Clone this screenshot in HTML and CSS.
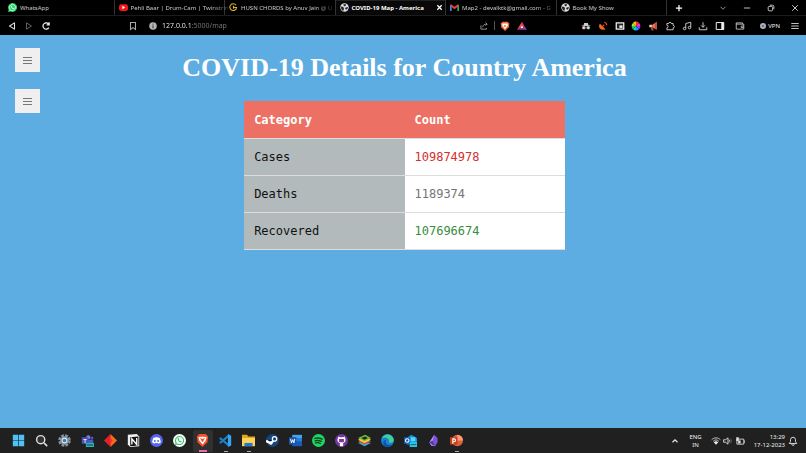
FILE: index.html
```html
<!DOCTYPE html>
<html lang="en">
<head>
<meta charset="utf-8">
<title>COVID-19 Map - America</title>
<link rel="stylesheet" href="styles.css">
</head>
<body>
<header class="browser">
  <div class="tabstrip">
    <div class="tabs">
      <button class="tab"><svg viewBox="0 0 16 16"><path fill="#25d366" d="M8 0a8 8 0 1 1-3.700 15L0 16l1.200-4A8 8 0 0 1 8 0z"/><path fill="none" stroke="#fff" stroke-width="1.200" d="M8 2.500a5.500 5.500 0 1 1-3 10.200l-2 .5.600-2A5.500 5.500 0 0 1 8 2.500z"/><path fill="#fff" d="M5.500 5l1.200-.2.800 1.700-.6.900 1.800 1.700.9-.6 1.600.9-.3 1.300C8.500 12 4.500 8.500 5.500 5z"/></svg><span class="label">WhatsApp</span></button>
      <button class="tab"><svg viewBox="0 0 16 16"><rect y="2" width="16" height="12" rx="4" fill="#f01818"/><path fill="#fff" d="M6 5l5 3-5 3z"/></svg><span class="label faded">Pehli Baar | Drum-Cam | Twinstrin</span></button>
      <button class="tab"><svg viewBox="0 0 16 16"><path fill="none" stroke="#e0ad35" stroke-width="2" d="M12.500 4a6 6 0 1 0 1 4H8M8 5v5"/></svg><span class="label faded">HUSN CHORDS by Anuv Jain @ U</span></button>
      <button class="tab active"><svg viewBox="0 0 16 16"><circle cx="8" cy="8" r="7.500" fill="#ddd"/><path fill="#222" d="M2 6l4 1 1 3-1 4C3 13 1 9 2 6zM6 2l5 0-1 3-3 1zM10 8l4-1c0 3-1 4-3 5l-2-2z"/></svg><span class="label">COVID-19 Map - America</span><svg class="tab-close" viewBox="0 0 16 16"><path fill="none" stroke="#fff" stroke-width="3" d="M3 3l10 10M13 3L3 13"/></svg></button>
      <button class="tab"><svg viewBox="0 0 16 16"><path fill="#4285f4" d="M0 3h3v11H0z"/><path fill="#34a853" d="M13 3h3v11h-3z"/><path fill="none" stroke="#ea4335" stroke-width="3.200" d="M1.500 4L8 9l6.500-5"/></svg><span class="label faded">Map2 - devalktk@gmail.com - G</span></button>
      <button class="tab"><svg viewBox="0 0 16 16"><circle cx="8" cy="8" r="7.500" fill="#ddd"/><path fill="#222" d="M2 6l4 1 1 3-1 4C3 13 1 9 2 6zM6 2l5 0-1 3-3 1zM10 8l4-1c0 3-1 4-3 5l-2-2z"/></svg><span class="label">Book My Show</span></button>
    </div>
    <button class="icon new-tab" aria-label="New tab"><svg viewBox="0 0 16 16"><path fill="none" stroke="#fff" stroke-width="2" d="M8 3v10M3 8h10"/></svg></button>
    <div class="window-controls">
      <button class="icon" aria-label="Search tabs"><svg viewBox="0 0 16 16"><path fill="none" stroke="#999" stroke-width="1.500" d="M4 6l4 4 4-4"/></svg></button>
      <button class="icon" aria-label="Minimize"><svg viewBox="0 0 16 16"><path fill="none" stroke="#bbb" stroke-width="1.600" d="M3 8h10"/></svg></button>
      <button class="icon" aria-label="Restore"><svg viewBox="0 0 16 16"><rect x="3.500" y="5.500" width="7" height="7" rx="1.500" fill="none" stroke="#ccc" stroke-width="1.500"/><path fill="none" stroke="#ccc" stroke-width="1.500" d="M6 3.500h4.500a2 2 0 0 1 2 2V10"/></svg></button>
      <button class="icon" aria-label="Close"><svg viewBox="0 0 16 16"><path fill="none" stroke="#ddd" stroke-width="1.400" d="M3.500 3.500l9 9M12.500 3.500l-9 9"/></svg></button>
    </div>
  </div>
  <div class="toolbar">
    <nav class="nav">
      <button class="icon" aria-label="Back"><svg viewBox="0 0 16 16"><path fill="none" stroke="#ddd" stroke-width="1.700" stroke-linejoin="round" d="M12 3v10L4 8z"/></svg></button>
      <button class="icon" aria-label="Forward"><svg viewBox="0 0 16 16"><path fill="none" stroke="#666" stroke-width="1.500" stroke-linejoin="round" d="M4 3v10l8-5z"/></svg></button>
      <button class="icon" aria-label="Reload"><svg viewBox="0 0 16 16"><path fill="none" stroke="#eee" stroke-width="2" d="M12.500 10.500a5 5 0 1 1 0-5M13 2v4H9"/></svg></button>
    </nav>
    <div class="address">
      <button class="icon" aria-label="Bookmark"><svg viewBox="0 0 16 16"><path fill="none" stroke="#aaa" stroke-width="1.700" d="M4 2.500h8v11L8 10.500l-4 3z"/></svg></button>
      <button class="icon info" aria-label="Site information"><svg viewBox="0 0 16 16"><circle cx="8" cy="8" r="6" fill="#b5b5b5"/><path stroke="#333" stroke-width="1.600" d="M8 7v4.500M8 4.300v1.500"/></svg></button>
      <input class="url" type="text" aria-label="Address" value="127.0.0.1:5000/map">
      <button class="icon" aria-label="Share"><svg viewBox="0 0 16 16"><path fill="none" stroke="#aaa" stroke-width="1.300" d="M3 7v6h9v-2M6 10c0-4 3-5 7-5M10.500 2.500L13 5l-2.500 2.500"/></svg></button>
      <span class="divider"></span>
      <button class="icon shield" aria-label="Shields"><svg viewBox="0 0 16 16"><path fill="#f26b3a" d="M4 1h8l3 3-1 6-6 6-6-6-1-6z"/><path fill="#fff" d="M4 4h8l.5 3L8 13 3.500 7z"/><path fill="#f26b3a" d="M6 6l2 1 2-1-1 3-1 1-1-1z"/></svg></button>
      <button class="icon rewards" aria-label="Rewards"><svg viewBox="0 0 16 16"><path fill="#d0356b" d="M8 1l4 7-4 3z"/><path fill="#ef5138" d="M8 1L0 14l8-4z"/><path fill="#883ca5" d="M0 14h16l-4-6-4 2z"/><path fill="#fff" d="M8 7l2 4H6z"/></svg></button>
    </div>
    <div class="extensions">
      <button class="icon" aria-label="Incognito extension"><svg viewBox="0 0 16 16"><path fill="#ccc" d="M5 3h6l1 4h3v1H1V7h3z"/><circle cx="4.500" cy="10.500" r="3" fill="#b88"/><circle cx="11.500" cy="10.500" r="3" fill="#7aa"/><path fill="#fff" d="M3 10h3v2H3zM10 10h3v2h-3z"/></svg></button>
      <button class="icon" aria-label="Satellite extension"><svg viewBox="0 0 16 16"><path fill="#f06a20" d="M3 4c-4 7 2 12 9 9z"/><path fill="none" stroke="#e84820" stroke-width="1.800" d="M10 2a5 5 0 0 1 4 5M7 9l3-3"/></svg></button>
      <button class="icon" aria-label="Picture in picture"><svg viewBox="0 0 16 16"><path fill="#eee" d="M1 2h14v12H1z"/><path fill="#222" d="M3 4h10v8H3z"/><path fill="#eee" d="M7 7h5v4H7z"/></svg></button>
      <button class="icon" aria-label="Color picker"><svg viewBox="0 0 16 16"><path fill="#e33" d="M8 8V1a7 7 0 0 1 5 2z"/><path fill="#f3a" d="M8 8l5-5a7 7 0 0 1 2 5z"/><path fill="#83f" d="M8 8h7a7 7 0 0 1-2 5z"/><path fill="#28f" d="M8 8l5 5a7 7 0 0 1-5 2z"/><path fill="#1cc" d="M8 8v7a7 7 0 0 1-5-2z"/><path fill="#2c4" d="M8 8l-5 5a7 7 0 0 1-2-5z"/><path fill="#bd2" d="M8 8H1a7 7 0 0 1 2-5z"/><path fill="#fb2" d="M8 8L3 3a7 7 0 0 1 5-2z"/></svg></button>
      <button class="icon" aria-label="Megaphone extension"><svg viewBox="0 0 16 16"><path fill="#f07848" d="M14 1v13L7 10V6z"/><path fill="#d8c8c0" d="M2 6h5v4H2z"/><path fill="#b54a50" d="M4 10h4l1 5H6zM11 3h2v9h-2z"/></svg></button>
      <button class="icon" aria-label="Extensions"><svg viewBox="0 0 16 16"><path fill="none" stroke="#ccc" stroke-width="1.500" stroke-linejoin="round" d="M3 4h3a2 2 0 0 1 4 0h3v3a2 2 0 0 1 0 4v3H3v-3a2 2 0 0 0 0-4z"/></svg></button>
      <button class="icon" aria-label="Media"><svg viewBox="0 0 16 16"><path fill="none" stroke="#ccc" stroke-width="1.500" d="M6 12V4l8-2v8"/><circle cx="4" cy="12" r="2" fill="none" stroke="#ccc" stroke-width="1.500"/><circle cx="12" cy="10.500" r="2" fill="none" stroke="#ccc" stroke-width="1.500"/></svg></button>
      <button class="icon" aria-label="Downloads"><svg viewBox="0 0 16 16"><path fill="none" stroke="#ccc" stroke-width="1.500" d="M8 2v8M5 7l3 3 3-3M2 10v4h12v-4"/></svg></button>
      <button class="icon" aria-label="Side panel"><svg viewBox="0 0 16 16"><path fill="none" stroke="#eee" stroke-width="1.600" d="M2 2.500h12v11H2z"/><path fill="#eee" d="M10 2h4v12h-4z"/></svg></button>
    </div>
    <button class="icon wallet" aria-label="Wallet"><svg viewBox="0 0 16 16"><path fill="none" stroke="#bbb" stroke-width="1.500" d="M2 5V3h10v2M2 4v9h12V5H2M14 8h-4v2.500h4"/></svg></button>
    <button class="vpn"><span class="dot"></span>VPN</button>
    <button class="icon" aria-label="Menu"><svg viewBox="0 0 16 16"><path stroke="#ccc" stroke-width="1.500" d="M2 4h12M2 8h12M2 12h12"/></svg></button>
  </div>
</header>

<div class="page">
  <div class="menus">
    <button class="menu" aria-label="Open first menu"><svg viewBox="0 0 9 9"><path stroke="#777" d="M0 1.500h9M0 4.500h9M0 7.500h9"/></svg></button>
    <button class="menu" aria-label="Open second menu"><svg viewBox="0 0 9 9"><path stroke="#777" d="M0 1.500h9M0 4.500h9M0 7.500h9"/></svg></button>
  </div>
  <main class="details">
    <h1>COVID-19 Details for Country America</h1>
    <table>
      <thead><tr><th>Category</th><th>Count</th></tr></thead>
      <tbody>
        <tr><td>Cases</td><td class="cases">109874978</td></tr>
        <tr><td>Deaths</td><td class="deaths">1189374</td></tr>
        <tr><td>Recovered</td><td class="recovered">107696674</td></tr>
      </tbody>
    </table>
  </main>
</div>

<footer class="taskbar">
  <div class="apps">
    <button class="app" aria-label="Start"><svg viewBox="0 0 16 16"><path fill="#4cc2f5" d="M1 1h6.600v6.600H1zM8.400 1H15v6.600H8.400zM1 8.400h6.600V15H1zM8.400 8.400H15V15H8.400z"/></svg></button>
    <button class="app" aria-label="Search"><svg viewBox="0 0 16 16"><circle cx="7" cy="7" r="5" fill="#333" stroke="#ddd" stroke-width="1.800"/><path stroke="#ddd" stroke-width="2" d="M11 11l4 4"/></svg></button>
    <button class="app" aria-label="Settings"><svg viewBox="0 0 16 16"><circle cx="8" cy="8" r="6.200" fill="none" stroke="#84909c" stroke-width="3" stroke-dasharray="3.400 1.470"/><circle cx="8" cy="8" r="4.300" fill="#eee" stroke="#8b98a5" stroke-width="2"/><circle cx="8" cy="8" r="2.300" fill="#2583cf"/></svg></button>
    <button class="app" aria-label="Teams"><svg viewBox="0 0 16 16"><circle cx="9" cy="4" r="2.500" fill="#7b83eb"/><circle cx="13.500" cy="5" r="1.700" fill="#5059c9"/><path fill="#5059c9" d="M7 7h8v6H7z"/><path fill="#4b53bc" d="M1 4h8v8H1z"/><path fill="#fff" d="M3 6h4v1H5.500v4h-1V7H3z"/><path fill="#27b6b4" d="M6 11h10v5H6z"/><path stroke="#123" d="M7 13.500h8"/></svg></button>
    <button class="app" aria-label="Diamond app"><svg viewBox="0 0 16 16"><path fill="#e91e2d" d="M8 0L0 8l8 8z"/><path fill="#ff6a16" d="M8 0l8 8-8 8z"/><path fill="#f33" d="M8 4l3 4-3 4z"/></svg></button>
    <button class="app" aria-label="Notion"><svg viewBox="0 0 16 16"><path fill="#eee" d="M1 1l11-1 3 3v12l-11 1-3-3z"/><path fill="#111" d="M4 4l10-1v11L4 15z"/><path fill="none" stroke="#fff" stroke-width="1.700" d="M6 13V6l6 7V5"/></svg></button>
    <button class="app" aria-label="Discord"><svg viewBox="0 0 16 16"><circle cx="8" cy="8" r="8" fill="#5865f2"/><path fill="#fff" d="M4 5l3-1h2l3 1 1.500 5-3 2-1-1h-3l-1 1-3-2z"/><circle cx="6" cy="8.500" r="1.200" fill="#5865f2"/><circle cx="10" cy="8.500" r="1.200" fill="#5865f2"/></svg></button>
    <button class="app" aria-label="WhatsApp"><svg viewBox="0 0 16 16"><circle cx="8" cy="8" r="8" fill="#f4fff8"/><path fill="none" stroke="#37bd68" stroke-width="1.300" d="M8 3a5 5 0 1 1-2.500 9.300l-2.200.5.500-2.200A5 5 0 0 1 8 3z"/><path fill="#37bd68" d="M6 5l1 0 .6 1.600-.6.700 1.600 1.600.8-.6 1.400.8C9.500 12 5 9 6 5z"/></svg></button>
    <button class="app current" aria-label="Brave"><svg viewBox="0 0 16 16"><path fill="#f4512c" d="M4 0h8l3 3-1 7-6 6-6-6-1-7z"/><path fill="#fff" d="M3 4l3-.5h4l3 .5-1 4-4 5-4-5z"/><path fill="#f4512c" d="M5 5l3 1 3-1-1.500 3L8 10 6.500 8z"/></svg></button>
    <button class="app running" aria-label="Visual Studio Code"><svg viewBox="0 0 16 16"><path fill="none" stroke="#1782c9" stroke-width="2.700" stroke-linejoin="round" d="M12 2L2 10.500 1 9.500M12 14L2 5.500l-1 1"/><path fill="#35a6ef" d="M11 0l4 2v12l-4 2z"/></svg></button>
    <button class="app running" aria-label="File Explorer"><svg viewBox="0 0 16 16"><path fill="#e2a61c" d="M0 1h6l2 2h8v5H0z"/><path fill="#ffd35b" d="M0 5h16v10H0z"/><path fill="#2479c9" d="M3 11h10v4H3z"/></svg></button>
    <button class="app" aria-label="Steam"><svg viewBox="0 0 16 16"><circle cx="8" cy="8" r="8" fill="#14457a"/><path stroke="#fff" stroke-width="3" d="M0 8.500l6 3 4.500-5"/><circle cx="10.500" cy="6" r="2.700" fill="#14457a" stroke="#fff" stroke-width="1.500"/><circle cx="6" cy="11" r="2" fill="#fff"/></svg></button>
    <button class="app" aria-label="Word"><svg viewBox="0 0 16 16"><path fill="#41a5ee" d="M4 1h12v5H4z"/><path fill="#2b7cd3" d="M4 5h12v5H4z"/><path fill="#185abd" d="M4 9h12v6H4z"/><path fill="#1654ae" d="M0 4h9v9H0z"/><path fill="none" stroke="#fff" stroke-width="1.200" d="M2 6l1 5 1.500-4L6 11l1-5"/></svg></button>
    <button class="app" aria-label="Spotify"><svg viewBox="0 0 16 16"><circle cx="8" cy="8" r="8" fill="#1ed760"/><path fill="none" stroke="#142" stroke-width="1.700" stroke-linecap="round" d="M3.500 5.500c3-1 6-.7 9 .8M4 8.300c3-.8 5-.5 7.500.8M4.500 11c2-.6 4-.4 6 .7"/></svg></button>
    <button class="app" aria-label="GitHub Desktop"><svg viewBox="0 0 16 16"><circle cx="8" cy="8" r="8" fill="#75389f"/><path fill="#fff" d="M4 3l2 1h4l2-1 1 4c0 2-1 3.500-3 4v4H6v-4C4 10.500 3 9 3 7z"/><path fill="#75389f" d="M5 6h6v3l-1 1H6L5 9z"/></svg></button>
    <button class="app" aria-label="BlueStacks"><svg viewBox="0 0 16 16"><path fill="#31a8df" d="M0 11l6-2 10 2-8 4z"/><path fill="#e44b35" d="M0 9l8-4 8 4-8 4z"/><path fill="#f8d32f" d="M0 7l8-4 8 4-8 4z"/><path fill="#75b942" d="M0 5l9-4 7 4-8 4z"/><path fill="#222" d="M4 5l5-2 3 2-4 2z"/></svg></button>
    <button class="app" aria-label="Edge"><svg viewBox="0 0 16 16"><circle cx="8" cy="8" r="8" fill="#1683d3"/><path fill="#42cf9b" d="M1 5C4-1 13-1 15.500 6c1 4-3 6-6 4 2-4-3-7-8.500-5z"/><path fill="#0c55a4" d="M6 7c-2 5 3 8 8 6-3 4-10 4-11-1-1-3 1-5 3-5z"/></svg></button>
    <button class="app" aria-label="Outlook"><svg viewBox="0 0 16 16"><path fill="#1490df" d="M3 5l6-4 7 4v8H3z"/><path fill="#50d9ff" d="M5 4h9v5H5z"/><path fill="#0f5db8" d="M0 4h8v8H0z"/><circle cx="4" cy="8" r="2.200" fill="none" stroke="#fff" stroke-width="1.300"/><path fill="#27c5df" d="M7 10h9v6H7z"/><path stroke="#157" d="M8 13h7"/></svg></button>
    <button class="app" aria-label="Obsidian"><svg viewBox="0 0 16 16"><path fill="#7c50d9" d="M9 1l4 4v5l-3 5-5-1-2-4 2-3z"/><path fill="#b59aef" d="M9 1L7 8l3 7-5-1-2-4 2-3z"/><path fill="#5732a8" d="M7 8l3 7-4-2-3-3z"/></svg></button>
    <button class="app running" aria-label="PowerPoint"><svg viewBox="0 0 16 16"><circle cx="9" cy="8" r="7" fill="#e06038"/><path fill="#ff9b79" d="M9 1a7 7 0 0 1 7 7H9z"/><path fill="#c43e1c" d="M0 4h9v9H0z"/><path fill="none" stroke="#fff" stroke-width="1.400" d="M3.500 12V6H5a1.500 1.500 0 0 1 0 3.500H3.500"/></svg></button>
  </div>
  <div class="tray">
    <button class="icon" aria-label="Hidden icons"><svg viewBox="0 0 16 16"><path fill="none" stroke="#eee" stroke-width="1.800" d="M4 10l4-4 4 4"/></svg></button>
    <button class="language">ENG<br>IN</button>
    <button class="status" aria-label="Network, volume and battery">
      <svg viewBox="0 0 16 16"><path fill="none" stroke="#ccc" stroke-width="1.500" d="M1 6c4-4 10-4 14 0M3.500 8.500c3-3 6-3 9 0"/><path fill="#eee" d="M4.500 10c2-2 5-2 7 0L8 14z"/></svg>
      <svg viewBox="0 0 16 16"><path fill="none" stroke="#ddd" stroke-width="1.500" d="M1 6h3l4-3v10l-4-3H1zM10 6c1 1 1 3 0 4"/><path fill="none" stroke="#777" d="M12 4c2 2 2 6 0 8"/></svg>
      <svg viewBox="0 0 16 16"><path fill="none" stroke="#ddd" stroke-width="1.400" d="M3 5h11v8H3zM15.500 7v4"/><path fill="#ddd" d="M2 2h4v6H2zM5 7h4v5H5z"/></svg>
    </button>
    <button class="clock">13:29<br>17-12-2023</button>
    <button class="icon" aria-label="Notifications"><svg viewBox="0 0 16 16"><path fill="none" stroke="#ddd" stroke-width="1.500" stroke-linejoin="round" d="M2 12l2-3V6a4 4 0 0 1 8 0v3l2 3zM6 13a2 2 0 0 0 4 0"/></svg></button>
  </div>
</footer>
</body>
</html>
```

FILE: styles.css
```css
* {
  box-sizing: border-box;
}

body {
  margin: 0;
  min-height: 100vh;
  display: flex;
  flex-direction: column;
  font-family: "Noto Sans", "Open Sans", sans-serif;
  font-size: 6px;
  line-height: 8px;
  color: #ccc;
  background: #5dade2;
}

button {
  margin: 0;
  padding: 0;
  border: 0;
  background: none;
  color: inherit;
  font: inherit;
}

svg {
  display: block;
  flex: none;
}

.icon,
.icon svg {
  flex: none;
  width: 10px;
  height: 10px;
}

/* Browser chrome */
.browser {
  background: #000;
}

.tabstrip {
  display: flex;
  align-items: center;
  height: 16px;
  padding: 0 6px 0 4px;
  border-bottom: 1px solid #1c1c1c;
}

.tabs {
  display: flex;
  flex: 0 1 663px;
  min-width: 0;
  align-self: stretch;
}

.tab {
  flex: 1 1 0;
  min-width: 0;
  display: flex;
  align-items: center;
  gap: 3px;
  padding: 0 2px 0 4px;
  border-right: 1px solid #333;
  text-align: left;
}

.tab svg {
  width: 9px;
  height: 9px;
}

.tab .label {
  flex: 1;
  white-space: nowrap;
}

.tab .faded {
  mask-image: linear-gradient(90deg, #000 80%, rgba(0, 0, 0, 0.2));
}

.tab.active {
  background: #080808;
  color: #fff;
  font-weight: bold;
  box-shadow: inset 0 1px #222;
}

.tab .tab-close {
  width: 7px;
  height: 7px;
}

.new-tab {
  margin-left: 7px;
}

.window-controls {
  display: flex;
  gap: 14px;
  margin-left: auto;
}

.toolbar {
  display: flex;
  align-items: center;
  height: 19px;
  padding: 0 6px 0 7px;
}

.nav {
  display: flex;
  gap: 7px;
}

.address {
  flex: 1;
  min-width: 0;
  display: flex;
  align-items: center;
  margin: 0 54px 0 77px;
}

.info {
  margin: 0 4px 0 10px;
}

.url {
  flex: 1;
  min-width: 0;
  padding: 0;
  border: 0;
  font: 7px/10px "Noto Sans", "Open Sans", sans-serif;
  color: transparent;
  background: linear-gradient(90deg, #fff 29px, #777 29px);
  background-clip: text;
}

.divider {
  width: 1px;
  height: 9px;
  margin: 0 5px;
  background: #555;
}

.rewards {
  margin-left: 7px;
}

.extensions {
  display: flex;
  justify-content: space-between;
  width: 144px;
}

.wallet {
  margin: 0 15px 0 10px;
}

.vpn {
  display: flex;
  align-items: center;
  gap: 2px;
  margin-right: 10px;
  color: #eee;
}

.dot {
  width: 6px;
  height: 6px;
  border: 2px solid #a9aec4;
  border-radius: 50%;
  background: #555;
}

/* Page */
.page {
  flex: 1;
  display: grid;
  grid-template-columns: 40px 1fr 37px;
}

.menus {
  display: flex;
  flex-direction: column;
  align-items: flex-end;
  gap: 17px;
  padding-top: 13px;
}

.menu {
  display: flex;
  align-items: center;
  justify-content: center;
  width: 25px;
  height: 24px;
  padding-top: 1px;
  background: #efefef;
}

.menu svg {
  width: 9px;
  height: 9px;
}

h1 {
  margin: 18px 0;
  font: bold 26px/30px "Liberation Serif", "Times New Roman", serif;
  text-align: center;
  color: #fff;
}

table {
  width: 44%;
  margin: 0 auto;
  table-layout: fixed;
  border-collapse: collapse;
  font: 12px/16px "DejaVu Sans Mono", Consolas, monospace;
  background: #fff;
}

th,
td {
  padding: 10px;
  border-bottom: 1px solid #ddd;
  text-align: left;
}

th {
  padding-top: 11px;
  background: #ec7063;
  color: #fff;
}

td:first-child {
  background: #b2babb;
  color: #111;
}

.cases {
  color: #d32f2f;
}

.deaths {
  color: #757575;
}

.recovered {
  color: #388e3c;
}

/* Taskbar */
.taskbar {
  display: flex;
  align-items: center;
  justify-content: space-between;
  height: 25px;
  padding: 0 8px;
  background: #202020;
  color: #eee;
}

.apps {
  flex: 0 1 459px;
  display: flex;
  justify-content: space-between;
}

.app {
  position: relative;
  display: flex;
  align-items: center;
  justify-content: center;
  width: 20px;
  height: 22px;
  border-radius: 2px;
}

.app svg {
  width: 13px;
  height: 13px;
}

.current {
  background: #303030;
}

.current::after,
.running::after {
  content: "";
  position: absolute;
  bottom: 0;
  width: 4px;
  height: 1px;
  background: #aaa;
}

.current::after {
  width: 8px;
  height: 2px;
  background: #e86ab0;
}

.tray {
  display: flex;
  align-items: center;
}

.language {
  margin: 0 9px;
  text-align: center;
}

.status {
  display: flex;
  gap: 2px;
}

.status svg {
  width: 10px;
  height: 10px;
}

.clock {
  margin: 0 3px 0 9px;
  text-align: right;
}
```
